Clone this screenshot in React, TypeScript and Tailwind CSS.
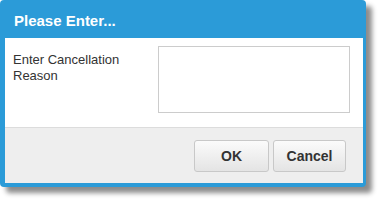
export default function App() {
  return (
    <div className="h-[204px] w-[381px] bg-white font-['Liberation_Sans',Arial,sans-serif]">
      <div className="flex w-[366px] h-[187px] flex-col rounded-[4px] bg-[#2b9bd8] pl-[5px] pr-[3px] pb-[4px] shadow-[6px_6px_5px_rgba(0,0,0,0.45)]">
        {/* title */}
        <div className="h-[38px] shrink-0 pl-[9px] pt-[12px] text-[15px] font-bold leading-[18px] text-white">
          Please Enter...
        </div>

        {/* body */}
        <div className="flex h-[89px] shrink-0 bg-white pt-[8px] pl-[8px] pr-[13px]">
          <div className="w-[145px] shrink-0 pt-[6px] text-[13px] leading-[16px] text-[#333]">
            Enter Cancellation Reason
          </div>
          <textarea className="h-[67px] w-[192px] resize-none border border-[#ccc] bg-white outline-none" />
        </div>

        {/* footer */}
        <div className="flex flex-1 items-start justify-end gap-[4px] border-t border-[#dcdcdc] bg-[#eeeeee] pt-[12px] pr-[17px]">
          <button className="h-[32px] w-[75px] rounded-[3px] border border-[#c8c8c8] bg-gradient-to-b from-[#fbfbfb] to-[#e4e4e4] text-[14px] font-bold text-[#333]">
            OK
          </button>
          <button className="h-[32px] w-[73px] rounded-[3px] border border-[#c8c8c8] bg-gradient-to-b from-[#fbfbfb] to-[#e4e4e4] text-[14px] font-bold text-[#333]">
            Cancel
          </button>
        </div>
      </div>
    </div>
  );
}
